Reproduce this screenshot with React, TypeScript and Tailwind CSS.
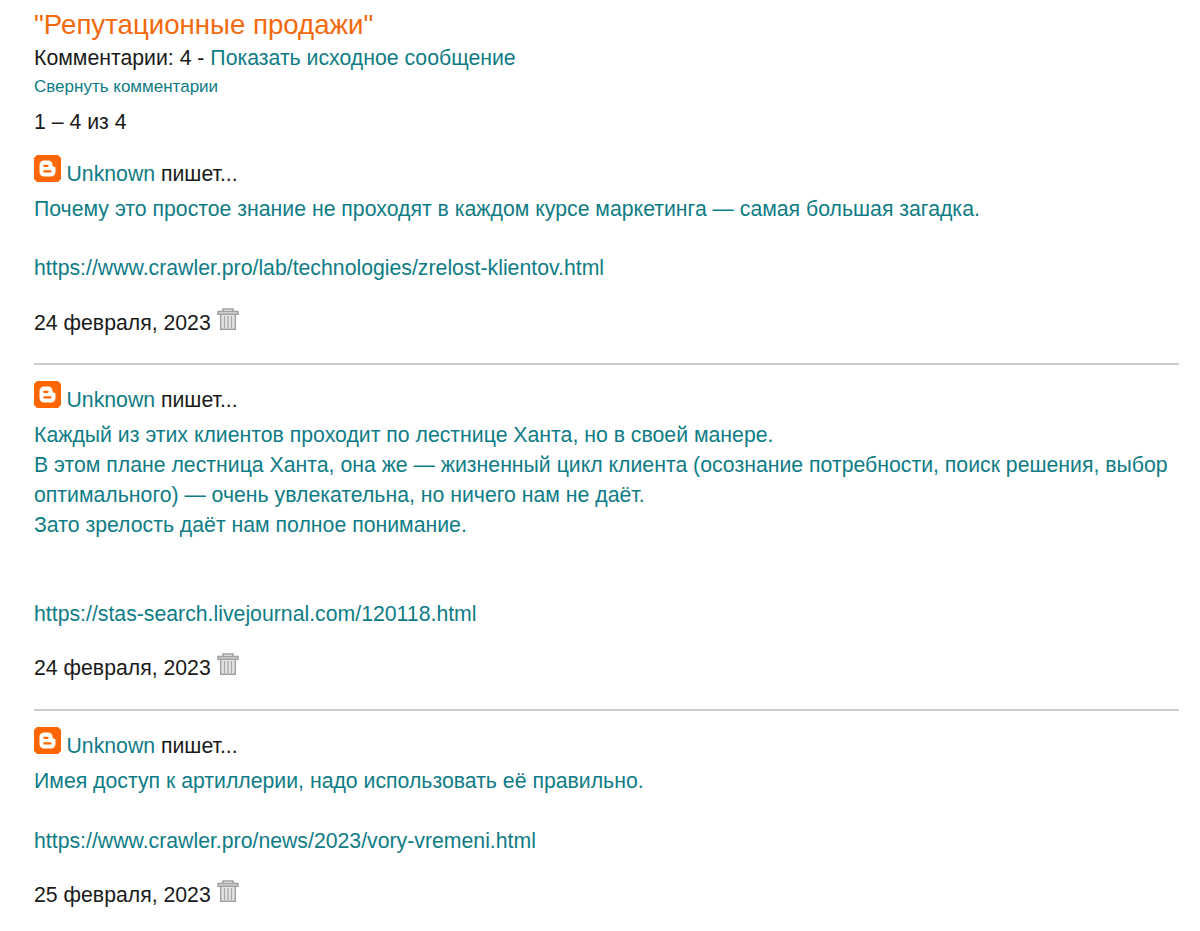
import React from "react";

interface IComment {
  text: string;
  url: string;
  date: string;
}

const comments: IComment[] = [
  {
    text: "Почему это простое знание не проходят в каждом курсе маркетинга — самая большая загадка.\n\n",
    url: "https://www.crawler.pro/lab/technologies/zrelost-klientov.html",
    date: "24 февраля, 2023",
  },
  {
    text: "Каждый из этих клиентов проходит по лестнице Ханта, но в своей манере.\nВ этом плане лестница Ханта, она же — жизненный цикл клиента (осознание потребности, поиск решения, выбор оптимального) — очень увлекательна, но ничего нам не даёт.\nЗато зрелость даёт нам полное понимание.\n\n\n",
    url: "https://stas-search.livejournal.com/120118.html",
    date: "24 февраля, 2023",
  },
  {
    text: "Имея доступ к артиллерии, надо использовать её правильно.\n\n",
    url: "https://www.crawler.pro/news/2023/vory-vremeni.html",
    date: "25 февраля, 2023",
  },
];

const BloggerIcon = () => (
  <svg width="27" height="27" viewBox="0 0 27 27" className="mr-[5.5px] shrink-0">
    <path d="M3 0h21l3 3v21l-3 3H3l-3-3V3z" fill="#ff6600" />
    <path
      d="M10 5.500h4c2.800 0 4.500 1.800 4.500 4.300 0 1.200.5 1.900 1.500 1.900s1.500.5 1.500 1.300v4c0 2.500-2 4.500-4.500 4.500h-7c-2.500 0-4.500-2-4.500-4.500v-7c0-2.500 2-4.500 4.500-4.500z"
      fill="#fff"
    />
    <path
      d="M10.300 10.800h3.200M10.300 16.300h6.200"
      stroke="#ff6600"
      strokeWidth="2.300"
      strokeLinecap="round"
    />
  </svg>
);

const TrashIcon = () => (
  <svg width="22" height="23" viewBox="0 0 22 23" className="ml-[6px] shrink-0">
    <path d="M6 3.500V1h10v2.500" fill="#eee" stroke="#a0a0a0" strokeWidth="1.500" />
    <path d="M3.700 6h14.600v15.300H3.700z" fill="#e4e4e4" stroke="#a0a0a0" strokeWidth="1.500" />
    <path d="M1 3.500h20v2.800H1z" fill="#d8d8d8" stroke="#a0a0a0" strokeWidth="1.500" />
    <path d="M7.500 8v12M11 8v12M14.500 8v12" stroke="#a8a8a8" strokeWidth="1.300" />
  </svg>
);

interface ICommentItemProps {
  comment: IComment;
}

const CommentItem: React.FunctionComponent<ICommentItemProps> = ({ comment }) => (
  <div className="mb-[16.4px] border-b-2 border-[#ccc] pb-[25.2px]">
    <div className="flex h-[34px] items-start">
      <BloggerIcon />
      <p className="pt-1">
        <a className="text-[#0e7c86]">Unknown</a> пишет...
      </p>
    </div>
    <p className="mt-1.5 leading-[29.85px] whitespace-pre-line text-[#0e7c86]">
      {comment.text}
      {comment.url}
    </p>
    <div className="mt-[23.4px] flex items-start">
      <span>{comment.date}</span>
      <TrashIcon />
    </div>
  </div>
);

const App: React.FunctionComponent = () => {
  return (
    <div className="h-[931px] overflow-hidden bg-white pr-[21px] pl-[34px] font-['Liberation_Sans',Arial,sans-serif] text-[21.25px] leading-[30px] text-[#1a1a1a]">
      <h1 className="mb-0.5 pt-2 text-[27.65px] leading-[33px] text-[#f26a0d]">"Репутационные продажи"</h1>
      <p>
        Комментарии: 4 - <a className="text-[#0e7c86]">Показать исходное сообщение</a>
      </p>
      <p className="text-[17px] leading-[28px] text-[#0e7c86]">Свернуть комментарии</p>
      <p className="mt-1.5 mb-[17.6px]">1 – 4 из 4</p>
      {comments.map((comment, index) => (
        <CommentItem key={index} comment={comment} />
      ))}
    </div>
  );
};

export default App;
